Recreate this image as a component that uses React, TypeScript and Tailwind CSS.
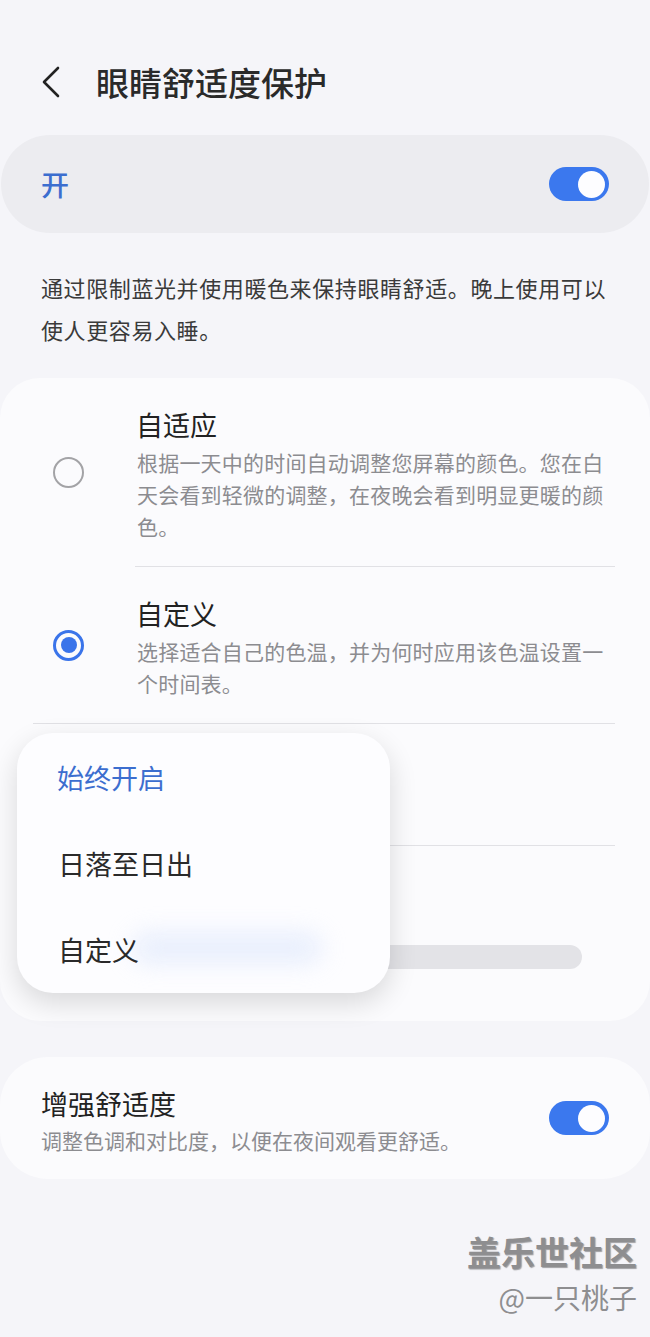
import React from "react";

function Toggle() {
  return (
    <div className="flex h-[34px] w-[60px] shrink-0 items-center justify-end rounded-full bg-[#3b78ee] pr-[4px]">
      <div className="h-[27px] w-[27px] rounded-full bg-[#fdfdff]" />
    </div>
  );
}

function Radio({ checked }: { checked?: boolean }) {
  if (checked) {
    return (
      <div className="flex h-[31px] w-[31px] items-center justify-center rounded-full border-[3px] border-[#3a74ea]">
        <div className="h-[16px] w-[16px] rounded-full bg-[#3a74ea]" />
      </div>
    );
  }
  return <div className="h-[31px] w-[31px] rounded-full border-2 border-[#a3a3a6]" />;
}

function OptionRow({
  title,
  desc,
  checked,
  divider,
}: {
  title: string;
  desc: string;
  checked?: boolean;
  divider?: boolean;
}) {
  return (
    <div className="flex items-center">
      <div className="flex w-[135px] shrink-0 justify-center pl-[2px]">
        <Radio checked={checked} />
      </div>
      <div
        className={
          "mr-[35px] flex-1 pt-[30px] pb-[24px] " +
          (divider ? "border-b border-[#e1e1e5]" : "")
        }
      >
        <div className="pl-[1px] text-[27px] leading-[34px] text-[#222]">{title}</div>
        <div className="mt-[4px] pl-[2px] text-[21px] leading-[32px] tracking-[0.2px] text-[#8c8c90]">{desc}</div>
      </div>
    </div>
  );
}

export default function App() {
  return (
    <div className="relative min-h-[1337px] bg-[#f5f5f9] font-['Noto_Sans_CJK_SC',sans-serif] text-[#222]">
      {/* header */}
      <div className="box-content flex h-[40px] items-center pt-[62px]">
        <svg width="20" height="32" viewBox="0 0 20 32" className="ml-[41px]">
          <polyline points="17,2 3,16 17,30" fill="none" stroke="#222" strokeWidth="2.6" strokeLinejoin="round" strokeLinecap="round" />
        </svg>
        <h1 className="ml-[35px] text-[33px] font-medium leading-[40px] text-[#2a2a2a]">眼睛舒适度保护</h1>
      </div>

      {/* master switch */}
      <div className="mx-[1px] mt-[33px] flex h-[98px] items-center justify-between rounded-full bg-[#ececf0] pl-[40px] pr-[40px]">
        <span className="text-[28px] font-medium text-[#3c6ecf]">开</span>
        <Toggle />
      </div>

      <p className="mt-[33px] px-[41px] text-[22px] leading-[42px] tracking-[0.6px] text-[#3a3a3a]">
        通过限制蓝光并使用暖色来保持眼睛舒适。晚上使用可以使人更容易入睡。
      </p>

      {/* options card */}
      <div className="relative mt-[28px] rounded-[40px] bg-[#fbfbfd]">
        <OptionRow
          title="自适应"
          desc="根据一天中的时间自动调整您屏幕的颜色。您在白天会看到轻微的调整，在夜晚会看到明显更暖的颜色。"
          divider
        />
        <OptionRow
          title="自定义"
          desc="选择适合自己的色温，并为何时应用该色温设置一个时间表。"
          checked
        />
        <div className="ml-[33px] mr-[35px] border-t border-[#e1e1e5]" />
        {/* schedule row, covered by the menu */}
        <div className="ml-[135px] mr-[35px] h-[122px] border-b border-[#e1e1e5]" />
        {/* colour temperature slider row */}
        <div className="px-[68px] pt-[99px] pb-[52px]">
          <div className="h-[24px] rounded-full bg-[#e3e3e7]" />
        </div>

        {/* popup menu */}
        <div className="absolute left-[17px] top-[355px] w-[373px] overflow-hidden rounded-[36px] bg-[#fdfdff] pt-[2px] shadow-[0_10px_28px_rgba(0,0,0,0.14)]">
          <div className="pointer-events-none absolute left-[115px] top-[200px] h-[30px] w-[190px] rounded-full bg-[#d9e4fb] opacity-60 blur-[12px]" />
          <div className="relative flex h-[86px] items-center pl-[40px] text-[27px] text-[#3c6ecf]">始终开启</div>
          <div className="relative flex h-[86px] items-center pl-[41px] text-[27px] text-[#2a2a2a]">日落至日出</div>
          <div className="relative flex h-[86px] items-center pl-[41px] text-[27px] text-[#2a2a2a]">自定义</div>
        </div>
      </div>

      {/* extra comfort */}
      <div className="mt-[36px] flex items-center justify-between rounded-[48px] bg-[#fbfbfd] pl-[41px] pr-[41px]">
        <div className="pt-[30px] pb-[24px]">
          <div className="text-[27px] leading-[34px] text-[#222]">增强舒适度</div>
          <div className="mt-[4px] text-[21px] leading-[30px] text-[#8c8c90]">调整色调和对比度，以便在夜间观看更舒适。</div>
        </div>
        <Toggle />
      </div>

      {/* watermark */}
      <div className="mt-[53px] pr-[13px] text-right">
        <div className="text-[34px] font-bold leading-[40px] text-[#8e8e90] [text-shadow:1px_1px_1px_rgba(0,0,0,0.35)]">盖乐世社区</div>
        <div className="mt-[7px] text-[28px] leading-[36px] text-[#8e8e90]">@一只桃子</div>
      </div>
    </div>
  );
}
